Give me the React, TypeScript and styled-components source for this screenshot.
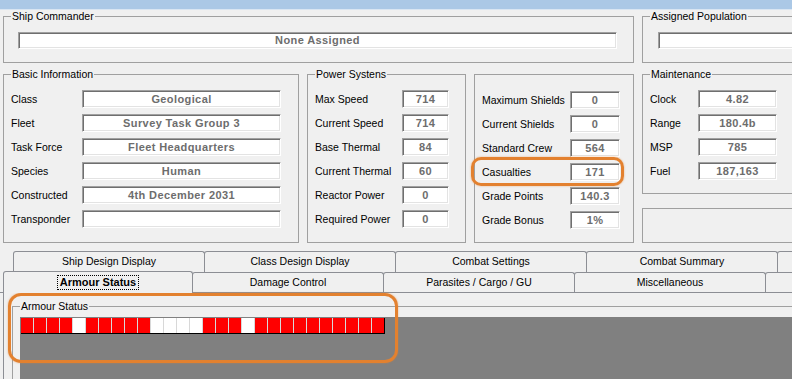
import React from 'react'
import styled, { createGlobalStyle } from 'styled-components'

const GlobalStyle = createGlobalStyle`
	html, body {
		margin: 0;
		padding: 0;
		background: #f0f0f0;
		overflow: hidden;
	}
	body {
		font-family: "Liberation Sans", Arial, sans-serif;
		font-size: 10.5px;
		color: #000;
	}
`

interface Field {
	label: string
	value: string
}

const basicInfo: Field[] = [
	{ label: 'Class', value: 'Geological' },
	{ label: 'Fleet', value: 'Survey Task Group 3' },
	{ label: 'Task Force', value: 'Fleet Headquarters' },
	{ label: 'Species', value: 'Human' },
	{ label: 'Constructed', value: '4th December 2031' },
	{ label: 'Transponder', value: '' },
]

const powerSystems: Field[] = [
	{ label: 'Max Speed', value: '714' },
	{ label: 'Current Speed', value: '714' },
	{ label: 'Base Thermal', value: '84' },
	{ label: 'Current Thermal', value: '60' },
	{ label: 'Reactor Power', value: '0' },
	{ label: 'Required Power', value: '0' },
]

const crewInfo: Field[] = [
	{ label: 'Maximum Shields', value: '0' },
	{ label: 'Current Shields', value: '0' },
	{ label: 'Standard Crew', value: '564' },
	{ label: 'Casualties', value: '171' },
	{ label: 'Grade Points', value: '140.3' },
	{ label: 'Grade Bonus', value: '1%' },
]

const maintenance: Field[] = [
	{ label: 'Clock', value: '4.82' },
	{ label: 'Range', value: '180.4b' },
	{ label: 'MSP', value: '785' },
	{ label: 'Fuel', value: '187,163' },
]

const backTabs = ['Ship Design Display', 'Class Design Display', 'Combat Settings', 'Combat Summary', '']
const frontTabs = ['Armour Status', 'Damage Control', 'Parasites / Cargo / GU', 'Miscellaneous', '']

// true = intact armour (red), false = destroyed (white)
const armour = 'RRRRWRRRRRWWWWRRRWRRRRRRRRRR'.split('').map((c) => c === 'R')

function FieldList({ fields, labelWidth, inputWidth }: { fields: Field[]; labelWidth: number; inputWidth: number }) {
	return (
		<FieldGrid $label={labelWidth} $input={inputWidth}>
			{fields.map((f) => (
				<React.Fragment key={f.label}>
					<Label>{f.label}</Label>
					<ValueBox>{f.value}</ValueBox>
				</React.Fragment>
			))}
		</FieldGrid>
	)
}

export default function App() {
	return (
		<Window>
			<GlobalStyle />
			<TitleEdge />
			<TopGrid>
				<Group style={{ gridColumn: '1 / 4' }}>
					<Legend>Ship Commander</Legend>
					<WideBox $width={599} $indent={7}>None Assigned</WideBox>
				</Group>
				<Group>
					<Legend>Assigned Population</Legend>
					<WideBox $width={150} $indent={8} />
				</Group>

				<Group>
					<Legend>Basic Information</Legend>
					<FieldList fields={basicInfo} labelWidth={71} inputWidth={199} />
				</Group>
				<Group>
					<Legend>Power Systens</Legend>
					<FieldList fields={powerSystems} labelWidth={87} inputWidth={47} />
				</Group>
				<Group $untitled>
					<FieldList fields={crewInfo} labelWidth={88} inputWidth={50} />
				</Group>
				<Stack>
					<Group>
						<Legend>Maintenance</Legend>
						<FieldList fields={maintenance} labelWidth={48} inputWidth={79} />
					</Group>
					<EmptyGroup />
				</Stack>
			</TopGrid>

			<Tabs>
				<TabRow $offset={13}>
					{backTabs.map((t, i) => (
						<Tab key={i} $width={192}>
							{t}
						</Tab>
					))}
				</TabRow>
				<TabRow $offset={3} $front>
					{frontTabs.map((t, i) =>
						i === 0 ? (
							<SelectedTab key={i} $width={190}>
								<FocusText>{t}</FocusText>
							</SelectedTab>
						) : (
							<Tab key={i} $width={192} $front>
								{t}
							</Tab>
						),
					)}
				</TabRow>
			</Tabs>

			<Panel>
				<ArmourGroup>
					<Legend>Armour Status</Legend>
					<ArmourView>
						<ArmourStrip>
							{armour.map((intact, i) => (
								<ArmourCell key={i} $intact={intact} />
							))}
						</ArmourStrip>
					</ArmourView>
				</ArmourGroup>
			</Panel>

			<Callout $x={471} $y={157} $w={153} $h={29} $r={10} />
			<Callout $x={8} $y={293} $w={390} $h={70} $r={13} />
		</Window>
	)
}

const Window = styled.div`
	position: relative;
	width: 792px;
	height: 379px;
	overflow: hidden;
	background: #f0f0f0;
`

const TitleEdge = styled.div`
	height: 9px;
	background: #abc8e6;
	border-bottom: 1px solid #d9e5f2;
`

const TopGrid = styled.div`
	display: grid;
	grid-template-columns: 296px 159px 160px 170px;
	column-gap: 8px;
	row-gap: 5px;
	padding-left: 3px;
`

const Group = styled.fieldset<{ $untitled?: boolean }>`
	margin: ${(p) => (p.$untitled ? '6px 0 0' : '0')};
	min-width: 0;
	border: 1px solid #a0a0a0;
	padding: ${(p) => (p.$untitled ? '16px' : '10px')} 6px 13px 7px;
`

const Legend = styled.legend`
	padding: 0 1px;
	line-height: 12px;
	font-size: 10.5px;
`

const Stack = styled.div`
	display: flex;
	flex-direction: column;
`

const EmptyGroup = styled.div`
	flex: 1;
	margin-top: 14px;
	border: 1px solid #a0a0a0;
`

const FieldGrid = styled.div<{ $label: number; $input: number }>`
	display: grid;
	grid-template-columns: ${(p) => p.$label}px ${(p) => p.$input}px;
	row-gap: 6px;
	align-items: center;
`

const Label = styled.span`
	white-space: nowrap;
	line-height: 18px;
`

const ValueBox = styled.div`
	box-sizing: border-box;
	height: 18px;
	background: #fff;
	border: 1px solid;
	border-color: #a0a0a0 #fff #fff #a0a0a0;
	box-shadow: inset 1px 1px 0 #6f6f6f, inset -1px -1px 0 #e3e3e3;
	color: #6d6d6d;
	font-weight: bold;
	font-size: 11px;
	letter-spacing: 0.4px;
	text-align: center;
	line-height: 16px;
	white-space: nowrap;
	overflow: hidden;
`

const WideBox = styled(ValueBox)<{ $width: number; $indent: number }>`
	width: ${(p) => p.$width}px;
	height: 17px;
	margin-left: ${(p) => p.$indent}px;
	line-height: 15px;
`

const Tabs = styled.div`
	margin-top: 8px;
`

const TabRow = styled.div<{ $offset: number; $front?: boolean }>`
	display: flex;
	align-items: flex-start;
	padding-left: ${(p) => p.$offset}px;
	border-bottom: ${(p) => (p.$front ? '1px solid #8c8e94' : 'none')};
	white-space: nowrap;
`

const Tab = styled.div<{ $width: number; $front?: boolean }>`
	flex: none;
	box-sizing: border-box;
	width: ${(p) => p.$width}px;
	height: ${(p) => (p.$front ? 20 : 21)}px;
	margin-left: -1px;
	border: 1px solid #8c8e94;
	border-bottom: none;
	border-radius: 3px 3px 0 0;
	background: #f0f0f0;
	text-align: center;
	line-height: 19px;
	&:first-child {
		margin-left: 0;
	}
`

const SelectedTab = styled(Tab)`
	position: relative;
	z-index: 1;
	height: 22px;
	margin-top: -1px;
	margin-bottom: -1px;
	line-height: 20px;
`

const FocusText = styled.span`
	display: inline-block;
	padding: 0 2px;
	border: 1px dotted #000;
	line-height: 13px;
	font-weight: bold;
	font-size: 11px;
`

const Panel = styled.div`
	margin-left: 3px;
	border-left: 1px solid #8c8e94;
	padding: 7px 0 0 8px;
	height: 100px;
`

const ArmourGroup = styled.fieldset`
	margin: 0;
	width: 800px;
	border: 1px solid #a0a0a0;
	padding: 5px 0 0 7px;
`

const ArmourView = styled.div`
	height: 70px;
	background: #808080;
	padding: 1px 0 0 1px;
`

const ArmourStrip = styled.div`
	display: flex;
	width: max-content;
	border-bottom: 1px solid #000;
	border-right: 1px solid #000;
`

const ArmourCell = styled.div<{ $intact: boolean }>`
	width: 12px;
	height: 15px;
	background: ${(p) => (p.$intact ? '#ff0000' : '#ffffff')};
	border-left: 1px solid #d8d8d8;
	&:first-child {
		border-left: none;
		width: 12px;
	}
`

const Callout = styled.div<{ $x: number; $y: number; $w: number; $h: number; $r: number }>`
	position: absolute;
	left: ${(p) => p.$x}px;
	top: ${(p) => p.$y}px;
	width: ${(p) => p.$w}px;
	height: ${(p) => p.$h}px;
	box-sizing: border-box;
	border: 3px solid #e3812f;
	border-radius: ${(p) => p.$r}px;
	box-shadow: 0 0 2px rgba(227, 129, 47, 0.6);
	pointer-events: none;
`
